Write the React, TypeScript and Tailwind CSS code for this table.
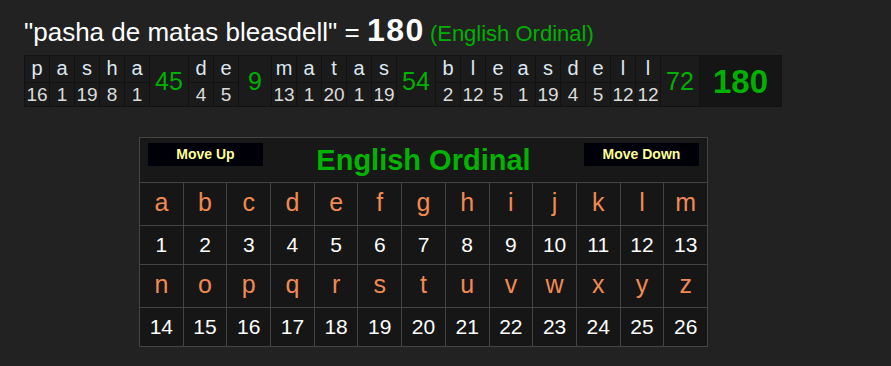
import React from "react";

type Word = { letters: string[]; sum: number };

const ordinal = (c: string) => c.charCodeAt(0) - 96;

const phrase = "pasha de matas bleasdell";
const words: Word[] = phrase.split(" ").map((w) => {
  const letters = w.split("");
  return { letters, sum: letters.reduce((s, c) => s + ordinal(c), 0) };
});
const total = words.reduce((s, w) => s + w.sum, 0);

const alphabet = "abcdefghijklmnopqrstuvwxyz".split("");

const Breakdown = () => (
  <table className="border-collapse bg-[#1b1b1b]">
    <tbody>
      <tr>
        {words.map((w, wi) => (
          <React.Fragment key={wi}>
            {w.letters.map((c, i) => (
              <td
                key={i}
                className="border border-[#121212] w-[25px] h-[27px] p-0 text-center text-[20px] leading-none text-[#dde8f2] align-bottom pb-[4px]"
              >
                {c}
              </td>
            ))}
            <td
              rowSpan={2}
              className={
                "border border-[#121212] p-0 text-center text-[25px] text-[#00b000] leading-none " +
                (w.sum > 9 ? "w-[39px]" : "w-[33px]")
              }
            >
              {w.sum}
            </td>
          </React.Fragment>
        ))}
        <td
          rowSpan={2}
          className="border border-[#121212] bg-[#151515] w-[82px] p-0 text-center text-[33px] font-bold text-[#00b000] leading-none"
        >
          {total}
        </td>
      </tr>
      <tr>
        {words.map((w, wi) =>
          w.letters.map((c, i) => (
            <td
              key={`${wi}-${i}`}
              className="border border-[#121212] h-[24px] p-0 text-center text-[19px] leading-none text-[#dcdcdc]"
            >
              {ordinal(c)}
            </td>
          ))
        )}
      </tr>
    </tbody>
  </table>
);

const CipherChart = () => (
  <div className="w-[569px] grid grid-cols-13 gap-px bg-[#444] p-px">
    <div className="col-span-13 h-[44px] bg-[#181818] flex items-start justify-between pl-[8px] pr-[8px] pt-[5px]">
      <button className="w-[115px] h-[23px] bg-[#000008] text-[#ffff99] text-[14px] font-bold">
        Move Up
      </button>
      <div className="text-[29px] font-bold text-[#00b400] leading-none pt-[3px]">
        English Ordinal
      </div>
      <button className="w-[115px] h-[23px] bg-[#000008] text-[#ffff99] text-[14px] font-bold">
        Move Down
      </button>
    </div>
    {[0, 13].map((start) => (
      <React.Fragment key={start}>
        {alphabet.slice(start, start + 13).map((c) => (
          <div
            key={c}
            className="h-[42px] bg-[#161616] flex items-center justify-center text-[25px] text-[#f08a52] pb-[2px]"
          >
            {c}
          </div>
        ))}
        {alphabet.slice(start, start + 13).map((c) => (
          <div
            key={c + "n"}
            className="h-[38px] bg-[#161616] flex items-center justify-center text-[21px] text-white"
          >
            {ordinal(c)}
          </div>
        ))}
      </React.Fragment>
    ))}
  </div>
);

export default function App() {
  return (
    <div
      className="min-h-screen bg-[#222222] pt-[6px] pl-[24px]"
      style={{ fontFamily: '"Liberation Sans", Arial, sans-serif' }}
    >
      <div className="flex items-baseline h-[49px]">
        <span className="text-[26px] text-white">"{phrase}" =&nbsp;</span>
        <span className="text-[32px] font-bold text-white tracking-[1.5px]">{total}</span>
        <span className="text-[22px] text-[#00b000] ml-[5px]">(English Ordinal)</span>
      </div>
      <Breakdown />
      <div className="mt-[30px] ml-[115px]">
        <CipherChart />
      </div>
    </div>
  );
}
